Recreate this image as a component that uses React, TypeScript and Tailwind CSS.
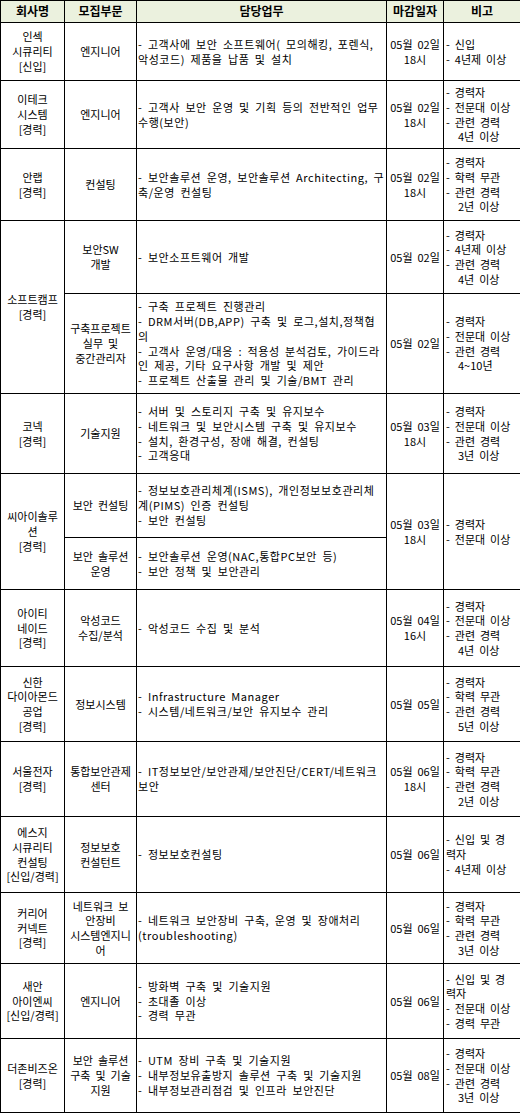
const FONT = "font-['Noto_Sans_CJK_KR','Noto_Sans',sans-serif]"

type Job = {
  part: string[]
  duty: string[]
}

type Row = {
  company: string[]
  jobs: Job[]
  due: string[]
  notes: string[]
  heights: number[]
}

const ROWS: Row[] = [
  {
    company: ['인섹', '시큐리티', '[신입]'],
    jobs: [{ part: ['엔지니어'], duty: ['- 고객사에 보안 소프트웨어( 모의해킹, 포렌식,', '악성코드) 제품을 납품 및 설치'] }],
    due: ['05월 02일', '18시'],
    notes: ['- 신입', '- 4년제 이상'],
    heights: [58],
  },
  {
    company: ['이테크', '시스템', '[경력]'],
    jobs: [{ part: ['엔지니어'], duty: ['- 고객사 보안 운영 및 기획 등의 전반적인 업무', '수행(보안)'] }],
    due: ['05월 02일', '18시'],
    notes: ['- 경력자', '- 전문대 이상', '- 관련 경력', '  4년 이상'],
    heights: [68],
  },
  {
    company: ['안랩', '[경력]'],
    jobs: [{ part: ['컨설팅'], duty: ['- 보안솔루션 운영, 보안솔루션 Architecting, 구', '축/운영 컨설팅'] }],
    due: ['05월 02일', '18시'],
    notes: ['- 경력자', '- 학력 무관', '- 관련 경력', '  2년 이상'],
    heights: [72],
  },
  {
    company: ['소프트캠프', '[경력]'],
    jobs: [
      { part: ['보안SW', '개발'], duty: ['- 보안소프트웨어 개발'] },
      {
        part: ['구축프로젝트', '실무 및', '중간관리자'],
        duty: [
          '- 구축 프로젝트 진행관리',
          '- DRM서버(DB,APP) 구축 및 로그,설치,정책협',
          '의',
          '- 고객사 운영/대응 : 적용성 분석검토, 가이드라',
          '인 제공, 기타 요구사항 개발 및 제안',
          '- 프로젝트 산출물 관리 및 기술/BMT 관리',
        ],
      },
    ],
    due: [],
    notes: [],
    heights: [73, 100],
  },
  {
    company: ['코넥', '[경력]'],
    jobs: [{
      part: ['기술지원'],
      duty: ['- 서버 및 스토리지 구축 및 유지보수', '- 네트워크 및 보안시스템 구축 및 유지보수', '- 설치, 환경구성, 장애 해결, 컨설팅', '- 고객응대'],
    }],
    due: ['05월 03일', '18시'],
    notes: ['- 경력자', '- 전문대 이상', '- 관련 경력', '  3년 이상'],
    heights: [80],
  },
  {
    company: ['씨아이솔루', '션', '[경력]'],
    jobs: [
      { part: ['보안 컨설팅'], duty: ['- 정보보호관리체계(ISMS), 개인정보보호관리체', '계(PIMS) 인증 컨설팅', '- 보안 컨설팅'] },
      { part: ['보안 솔루션', '운영'], duty: ['- 보안솔루션 운영(NAC,통합PC보안 등)', '- 보안 정책 및 보안관리'] },
    ],
    due: ['05월 03일', '18시'],
    notes: ['- 경력자', '- 전문대 이상'],
    heights: [64, 52],
  },
  {
    company: ['아이티', '네이드', '[경력]'],
    jobs: [{ part: ['악성코드', '수집/분석'], duty: ['- 악성코드 수집 및 분석'] }],
    due: ['05월 04일', '16시'],
    notes: ['- 경력자', '- 전문대 이상', '- 관련 경력', '  4년 이상'],
    heights: [77],
  },
  {
    company: ['신한', '다이아몬드', '공업', '[경력]'],
    jobs: [{ part: ['정보시스템'], duty: ['- Infrastructure Manager', '- 시스템/네트워크/보안 유지보수 관리'] }],
    due: ['05월 05일'],
    notes: ['- 경력자', '- 학력 무관', '- 관련 경력', '  5년 이상'],
    heights: [75],
  },
  {
    company: ['서울전자', '[경력]'],
    jobs: [{ part: ['통합보안관제', '센터'], duty: ['- IT정보보안/보안관제/보안진단/CERT/네트워크', '보안'] }],
    due: ['05월 06일', '18시'],
    notes: ['- 경력자', '- 학력 무관', '- 관련 경력', '  2년 이상'],
    heights: [75],
  },
  {
    company: ['에스지', '시큐리티', '컨설팅', '[신입/경력]'],
    jobs: [{ part: ['정보보호', '컨설턴트'], duty: ['- 정보보호컨설팅'] }],
    due: ['05월 06일'],
    notes: ['- 신입 및 경', '력자', '- 4년제 이상'],
    heights: [76],
  },
  {
    company: ['커리어', '커넥트', '[경력]'],
    jobs: [{
      part: ['네트워크 보', '안장비', '시스템엔지니', '어'],
      duty: ['- 네트워크 보안장비 구축, 운영 및 장애처리', '(troubleshooting)'],
    }],
    due: ['05월 06일'],
    notes: ['- 경력자', '- 학력 무관', '- 관련 경력', '  3년 이상'],
    heights: [71],
  },
  {
    company: ['새안', '아이엔씨', '[신입/경력]'],
    jobs: [{ part: ['엔지니어'], duty: ['- 방화벽 구축 및 기술지원', '- 초대졸 이상', '- 경력 무관'] }],
    due: ['05월 06일'],
    notes: ['- 신입 및 경', '력자', '- 전문대 이상', '- 경력 무관'],
    heights: [75],
  },
  {
    company: ['더존비즈온', '[경력]'],
    jobs: [{
      part: ['보안 솔루션', '구축 및 기술', '지원'],
      duty: ['- UTM 장비 구축 및 기술지원', '- 내부정보유출방지 솔루션 구축 및 기술지원', '- 내부정보관리점검 및 인프라 보안진단'],
    }],
    due: ['05월 08일'],
    notes: ['- 경력자', '- 전문대 이상', '- 관련 경력', '  3년 이상'],
    heights: [74],
  },
]

// softcamp has its own date and note per sub-row
const SOFTCAMP_EXTRA = [
  { due: ['05월 02일'], notes: ['- 경력자', '- 4년제 이상', '- 관련 경력', '  4년 이상'] },
  { due: ['05월 02일'], notes: ['- 경력자', '- 전문대 이상', '- 관련 경력', '  4~10년'] },
]

function Lines({ lines }: { lines: string[] }) {
  return (
    <>
      {lines.map((line, i) =>
        line.startsWith('  ') ? (
          <div key={i} className="whitespace-nowrap pl-[12px]">{line.trim()}</div>
        ) : (
          <div key={i} className="whitespace-nowrap">{line}</div>
        ),
      )}
    </>
  )
}

const cell = 'border border-black align-middle p-0'

export default function App() {
  return (
    <div className={`w-[520px] bg-white text-black ${FONT}`}>
      <table className="w-[520px] table-fixed border-collapse text-[11px] leading-[14.7px] [word-spacing:2.5px]">
        <colgroup>
          <col className="w-[64px]" />
          <col className="w-[72px]" />
          <col className="w-[250px]" />
          <col className="w-[57px]" />
          <col className="w-[77px]" />
        </colgroup>
        <thead>
          <tr className="h-[22px] bg-[#ebf1de] text-[12px] font-bold">
            <th className={`${cell} text-center`}>회사명</th>
            <th className={`${cell} text-center`}>모집부문</th>
            <th className={`${cell} text-center`}>담당업무</th>
            <th className={`${cell} text-center`}>마감일자</th>
            <th className={`${cell} text-center`}>비고</th>
          </tr>
        </thead>
        <tbody>
          {ROWS.map((row, r) =>
            row.jobs.map((job, j) => {
              const softcamp = row.company[0] === '소프트캠프'
              const span = softcamp ? 1 : row.jobs.length
              const due = softcamp ? SOFTCAMP_EXTRA[j].due : row.due
              const notes = softcamp ? SOFTCAMP_EXTRA[j].notes : row.notes
              return (
                <tr key={`${r}-${j}`} style={{ height: row.heights[j] }}>
                  {j === 0 && (
                    <td rowSpan={row.jobs.length} className={`${cell} text-center`}>
                      <Lines lines={row.company} />
                    </td>
                  )}
                  <td className={`${cell} text-center`}>
                    <Lines lines={job.part} />
                  </td>
                  <td className={`${cell} pl-[1px] text-left tracking-[0.55px]`}>
                    <Lines lines={job.duty} />
                  </td>
                  {(softcamp || j === 0) && (
                    <td rowSpan={span} className={`${cell} text-center`}>
                      <Lines lines={due} />
                    </td>
                  )}
                  {(softcamp || j === 0) && (
                    <td rowSpan={span} className={`${cell} pl-[2px] text-left`}>
                      <Lines lines={notes} />
                    </td>
                  )}
                </tr>
              )
            }),
          )}
        </tbody>
      </table>
    </div>
  )
}
